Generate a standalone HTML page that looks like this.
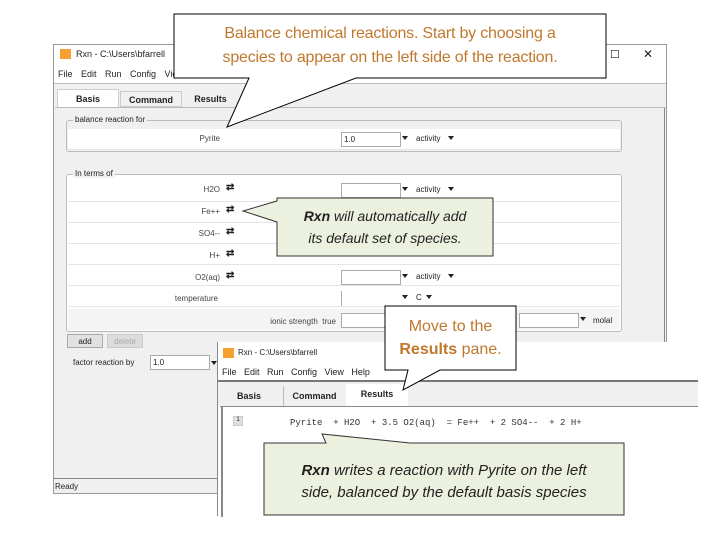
<!DOCTYPE html>
<html><head><meta charset="utf-8"><style>
*{margin:0;padding:0;box-sizing:border-box}
body{width:720px;height:540px;background:#fff;position:relative;overflow:hidden;font-family:"Liberation Sans",sans-serif;font-size:9px;color:#222}
.a{position:absolute}
.gb{border:1px solid #bbb;border-radius:3px}
.inp{position:absolute;background:#fff;border:1px solid #aaa;height:15px;width:60px}
.tri{position:absolute;width:0;height:0;border-left:3px solid transparent;border-right:3px solid transparent;border-top:4px solid #222}
.row{position:absolute;left:68px;width:552px;height:21px;background:#fff;border-bottom:1px solid #e4e4e4}
.lab{position:absolute;font-size:8px;color:#444;text-align:right}
.ico{position:absolute;font-size:10px;font-weight:bold}
.cal{position:absolute;font-family:"Liberation Sans",sans-serif;text-align:center;white-space:nowrap}
</style></head><body>
<!-- main window -->
<div class="a" style="left:53px;top:44px;width:614px;height:450px;background:#f0f0f0;border:1px solid #999"></div>
<div class="a" style="left:54px;top:45px;width:612px;height:38px;background:#fff"></div>
<div class="a" style="left:60px;top:49px;width:11px;height:10px;background:#f5a030"></div>
<div class="a" style="left:76px;top:49px;font-size:9px">Rxn - C:\Users\bfarrell</div>
<div class="a" style="left:58px;top:69px;font-size:9px;word-spacing:6px">File Edit Run Config View</div>
<div class="a" style="left:610px;top:48px;font-size:11px">☐</div>
<div class="a" style="left:643px;top:47px;font-size:12px">✕</div>
<div class="a" style="left:54px;top:83px;width:612px;height:1px;background:#bbb"></div>
<div class="a" style="left:57px;top:89px;width:62px;height:19px;background:#fff;border:1px solid #ccc;border-bottom:none;font-weight:bold;text-align:center;padding-top:4px">Basis</div>
<div class="a" style="left:120px;top:91px;width:62px;height:16px;border:1px solid #ccc;font-weight:bold;text-align:center;padding-top:3px">Command</div>
<div class="a" style="left:183px;top:91px;width:55px;height:16px;font-weight:bold;text-align:center;padding-top:3px">Results</div>
<div class="a" style="left:55px;top:107px;width:611px;height:1px;background:#bbb"></div>
<div class="a" style="left:664px;top:108px;width:1px;height:375px;background:#888"></div>
<div class="a gb" style="left:66px;top:120px;width:556px;height:32px"></div>
<div class="a" style="left:73px;top:115px;background:#f0f0f0;font-size:8px;padding:0 2px">balance reaction for</div>
<div class="row" style="top:129px"></div>
<div class="lab" style="left:150px;top:134px;width:70px">Pyrite</div>
<div class="inp" style="left:341px;top:132px;font-size:8px;padding:2px">1.0</div>
<div class="tri" style="left:402px;top:136px"></div>
<div class="a" style="left:416px;top:134px;font-size:8px">activity</div><div class="tri" style="left:448px;top:136px"></div>
<div class="a gb" style="left:66px;top:174px;width:556px;height:158px;background:#fff"></div>
<div class="a" style="left:73px;top:169px;background:#f0f0f0;font-size:8px;padding:0 2px">In terms of</div>
<div class="row" style="top:181px"></div>
<div class="row" style="top:202px"></div>
<div class="row" style="top:223px"></div>
<div class="row" style="top:244px"></div>
<div class="row" style="top:265px"></div>
<div class="row" style="top:286px"></div>
<div class="row" style="top:309px;background:#f4f4f4;border:none"></div>
<div class="lab" style="left:150px;top:185px;width:70px">H2O</div><div class="ico" style="left:226px;top:182px">⇄</div>
<div class="lab" style="left:150px;top:207px;width:70px">Fe++</div><div class="ico" style="left:226px;top:204px">⇄</div>
<div class="lab" style="left:150px;top:229px;width:70px">SO4--</div><div class="ico" style="left:226px;top:226px">⇄</div>
<div class="lab" style="left:150px;top:251px;width:70px">H+</div><div class="ico" style="left:226px;top:248px">⇄</div>
<div class="lab" style="left:150px;top:273px;width:70px">O2(aq)</div><div class="ico" style="left:226px;top:270px">⇄</div>
<div class="lab" style="left:150px;top:294px;width:68px">temperature</div>
<div class="lab" style="left:240px;top:317px;width:96px">ionic strength &nbsp;true</div>
<div class="inp" style="left:341px;top:183px"></div><div class="tri" style="left:402px;top:187px"></div>
<div class="a" style="left:416px;top:185px;font-size:8px">activity</div><div class="tri" style="left:448px;top:187px"></div>
<div class="inp" style="left:341px;top:270px"></div><div class="tri" style="left:402px;top:274px"></div>
<div class="a" style="left:416px;top:272px;font-size:8px">activity</div><div class="tri" style="left:448px;top:274px"></div>
<div class="a" style="left:341px;top:291px;width:1px;height:15px;background:#aaa"></div><div class="tri" style="left:402px;top:295px"></div>
<div class="a" style="left:416px;top:293px;font-size:8px">C</div><div class="tri" style="left:426px;top:295px"></div>
<div class="inp" style="left:341px;top:313px"></div>
<div class="inp" style="left:519px;top:313px"></div><div class="tri" style="left:580px;top:317px"></div>
<div class="a" style="left:593px;top:316px;font-size:8px">molal</div>
<div class="a" style="left:67px;top:334px;width:36px;height:14px;background:#e1e1e1;border:1px solid #aaa;font-size:8px;text-align:center;padding-top:2px">add</div>
<div class="a" style="left:107px;top:334px;width:36px;height:14px;background:#ddd;border:1px solid #ccc;color:#aaa;font-size:8px;text-align:center;padding-top:2px">delete</div>
<div class="a" style="left:73px;top:358px;font-size:8px">factor reaction by</div>
<div class="inp" style="left:150px;top:355px;width:60px;font-size:8px;padding:2px">1.0</div><div class="tri" style="left:211px;top:361px"></div>
<div class="a" style="left:54px;top:478px;width:612px;height:1px;background:#888"></div>
<div class="a" style="left:55px;top:482px;font-size:8px">Ready</div>
<!-- second window -->
<div class="a" style="left:217px;top:342px;width:481px;height:174px;background:#fff;border-left:1px solid #888"></div>
<div class="a" style="left:223px;top:348px;width:11px;height:10px;background:#f5a030"></div>
<div class="a" style="left:238px;top:348px;font-size:8px">Rxn - C:\Users\bfarrell</div>
<div class="a" style="left:222px;top:367px;font-size:9px;word-spacing:5px">File Edit Run Config View Help</div>
<div class="a" style="left:218px;top:380px;width:480px;height:26px;background:#f0f0f0;border-top:2px solid #777"></div>
<div class="a" style="left:237px;top:391px;font-weight:bold;font-size:9px">Basis</div>
<div class="a" style="left:283px;top:386px;width:62px;height:20px;border-left:1px solid #bbb;font-weight:bold;text-align:center;padding-top:5px">Command</div>
<div class="a" style="left:346px;top:384px;width:62px;height:23px;background:#fff;font-weight:bold;text-align:center;padding-top:5px">Results</div>
<div class="a" style="left:220px;top:406px;width:478px;height:1px;background:#888"></div>
<div class="a" style="left:221px;top:407px;width:2px;height:110px;background:#888"></div>
<div class="a" style="left:233px;top:416px;width:10px;height:10px;background:#e0e0e0;border:1px solid #ccc;font-size:6px;text-align:center">1</div>
<div class="a" style="left:290px;top:418px;font-family:'Liberation Mono',monospace;font-size:9px;white-space:pre;color:#333">Pyrite  + H2O  + 3.5 O2(aq)  = Fe++  + 2 SO4--  + 2 H+</div>
<!-- callouts -->
<svg class="a" style="left:0;top:0" width="720" height="540">
<polygon points="174,14 606,14 606,78 356,78 227,127 249,78 174,78" fill="#fff" stroke="#000" stroke-width="1"/>
<polygon points="277,198 493,198 493,256 277,256 277,222 243,211 277,201" fill="#ebf1de" stroke="#333" stroke-width="1"/>
<polygon points="385,306 516,306 516,370 440,370 403,390 408,370 385,370" fill="#fff" stroke="#000" stroke-width="1"/>
<polygon points="264,443 326,443 322,434 410,443 624,443 624,515 264,515" fill="#ebf1de" stroke="#333" stroke-width="1"/>
</svg>
<div class="cal" style="left:174px;top:22px;width:432px;font-size:16px;line-height:24px;color:#c0782e;letter-spacing:-0.2px">Balance chemical reactions. Start by choosing a<br>species to appear on the left side of the reaction.</div>
<div class="cal" style="left:277px;top:205px;width:216px;font-size:14px;line-height:22px;font-style:italic">
<b>Rxn</b> will automatically add<br>its default set of species.</div>
<div class="cal" style="left:385px;top:315px;width:131px;font-size:16px;line-height:23px;color:#c0782e">Move to the<br><b>Results</b> pane.</div>
<div class="cal" style="left:264px;top:460px;width:360px;font-size:15px;line-height:22px;font-style:italic"><b>Rxn</b> writes a reaction with Pyrite on the left<br>side, balanced by the default basis species</div>
</body></html>
